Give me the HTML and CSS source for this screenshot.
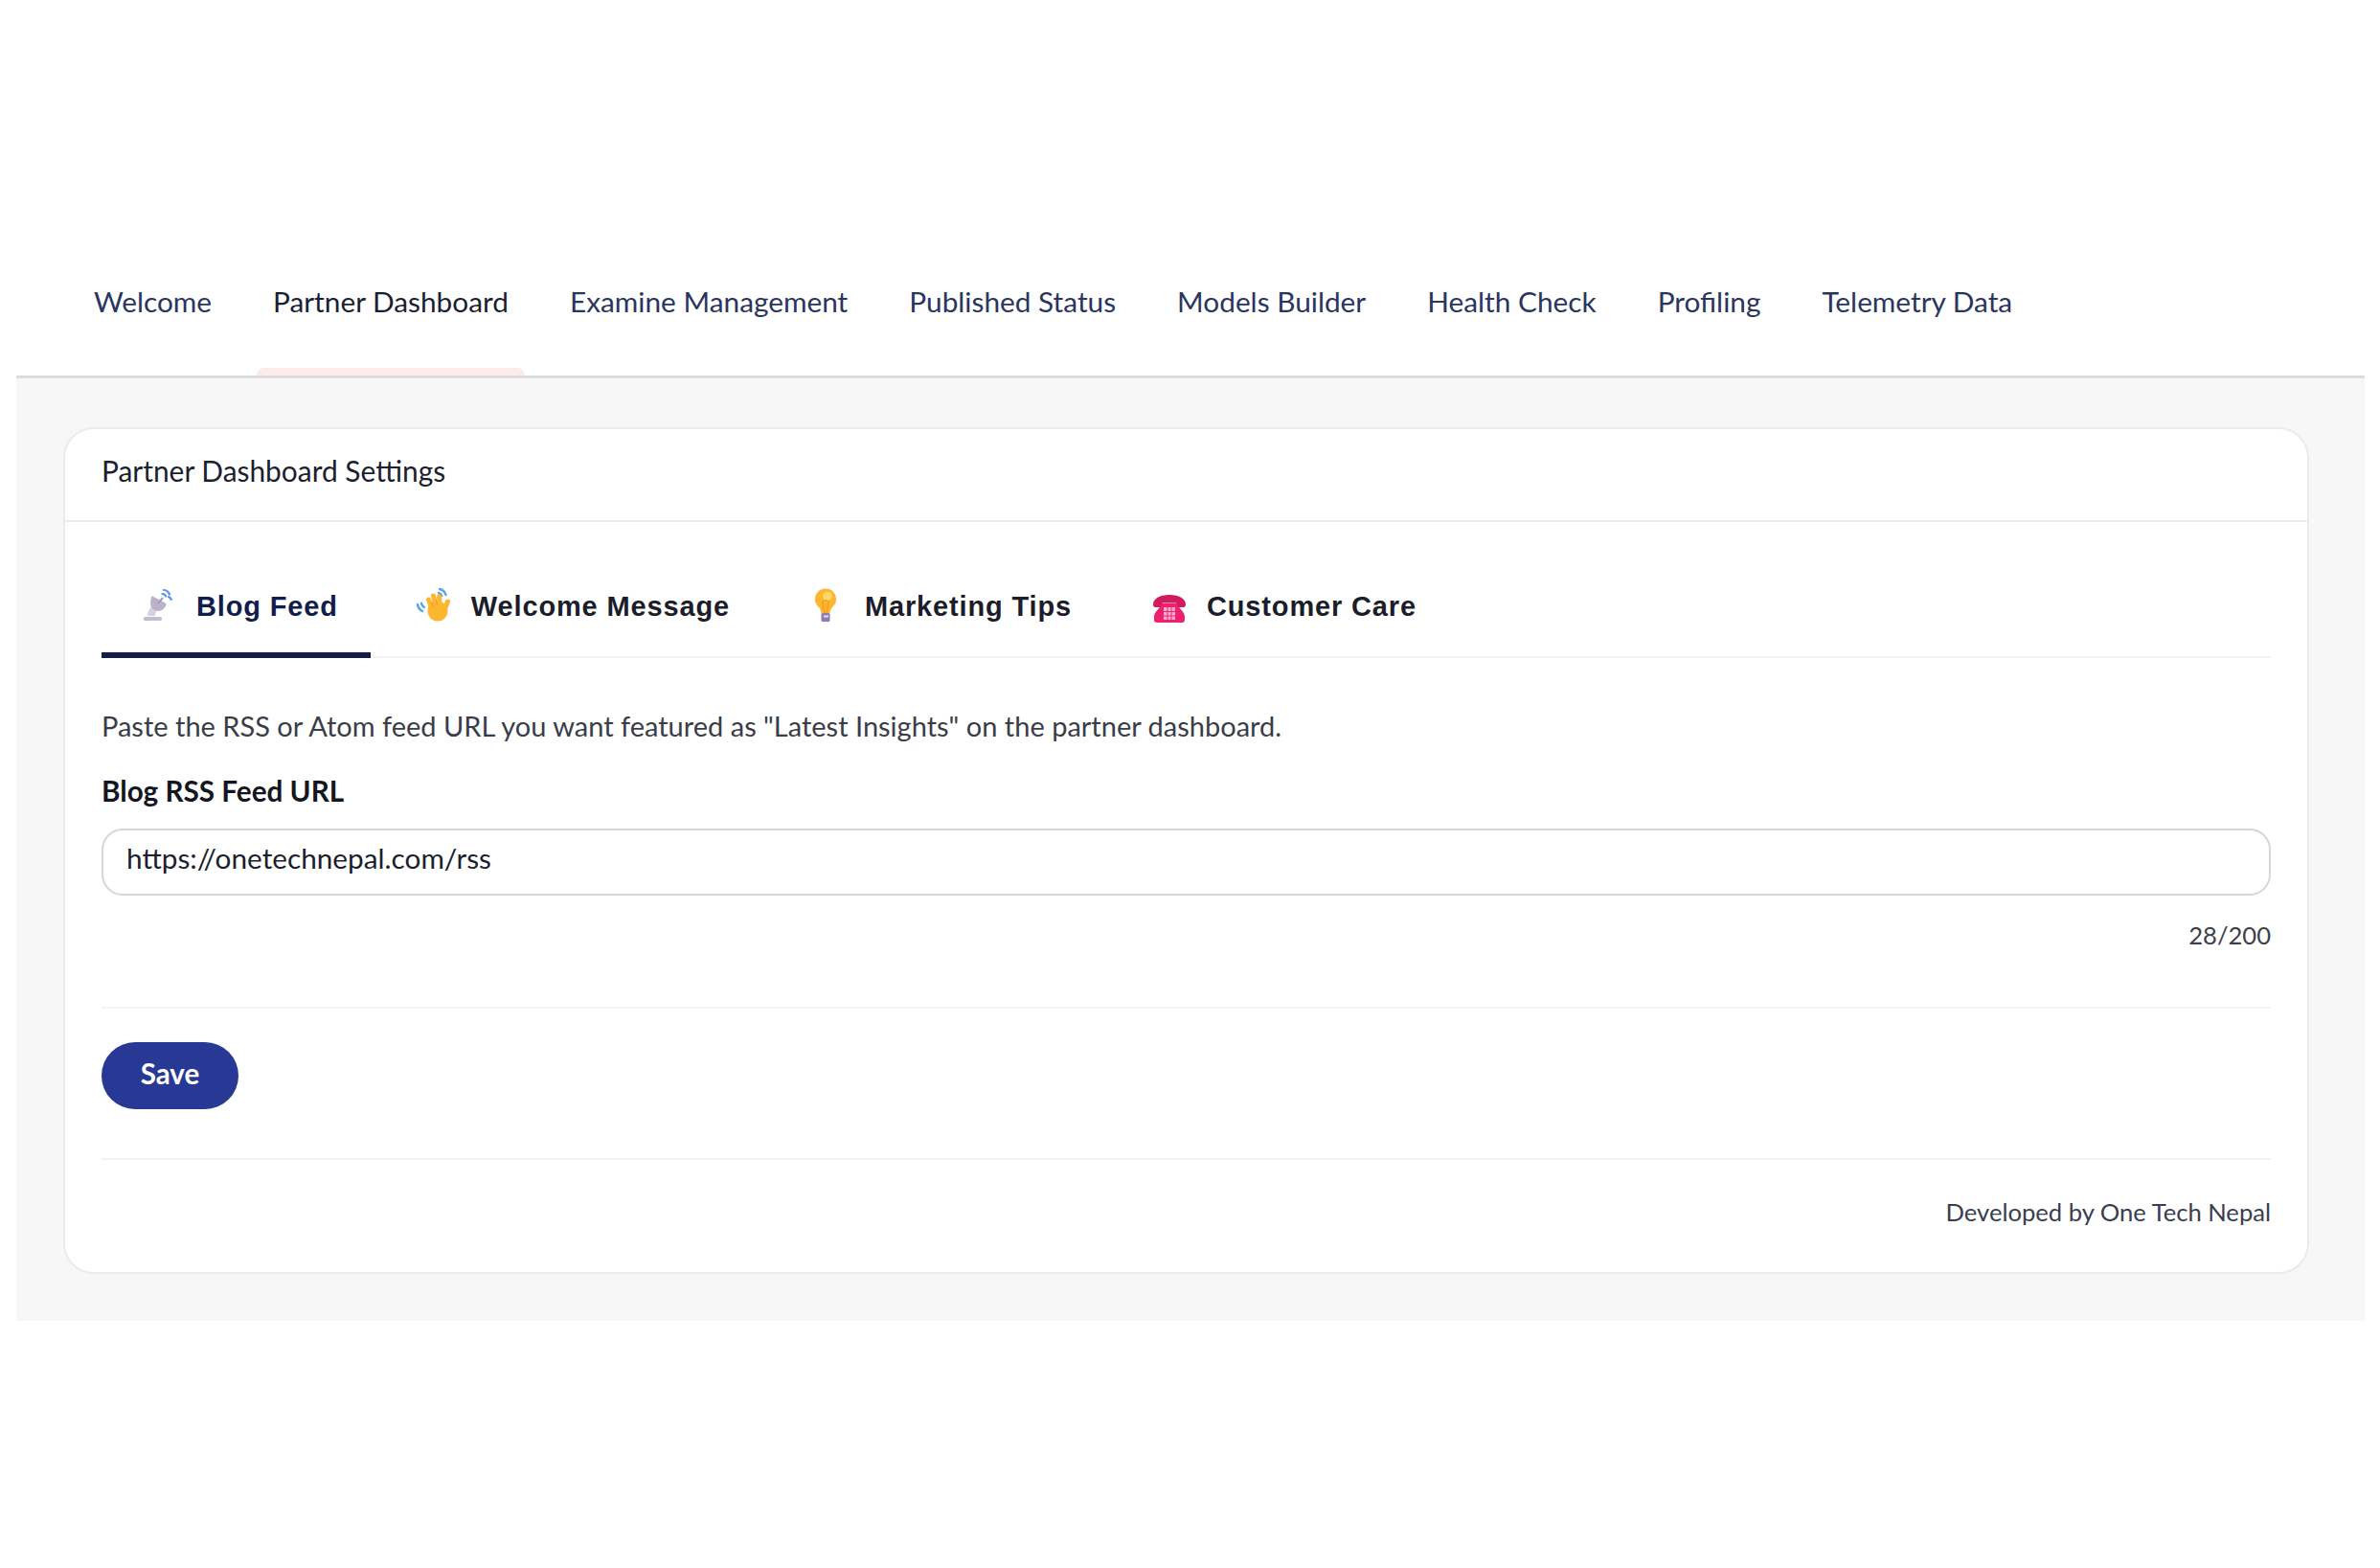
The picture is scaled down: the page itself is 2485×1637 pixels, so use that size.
FILE: index.html
```html
<!DOCTYPE html>
<html lang="en">
<head>
<meta charset="utf-8">
<title>Partner Dashboard Settings</title>
<link rel="stylesheet" href="styles.css">
</head>
<body>
<div class="shell">
  <nav class="topnav">
    <a class="topnav-item">Welcome</a>
    <a class="topnav-item is-active">Partner Dashboard</a>
    <a class="topnav-item">Examine Management</a>
    <a class="topnav-item">Published Status</a>
    <a class="topnav-item">Models Builder</a>
    <a class="topnav-item">Health Check</a>
    <a class="topnav-item">Profiling</a>
    <a class="topnav-item">Telemetry Data</a>
  </nav>
  <main class="content">
    <section class="card">
      <header class="card-head">Partner Dashboard Settings</header>
      <div class="card-body">
        <div class="tabs">
          <a class="tab is-active">
            <svg class="tab-icon" viewBox="0 0 36 36" aria-hidden="true">
              <path d="M23 2c2.500 .2 5 2 6 4.500M21.500 6c1.800 0 3 1 3.500 2.500M28 9c1.500 .6 2.500 1.600 2.800 3" fill="none" stroke="#5b8ff0" stroke-width="2.200" stroke-linecap="round"/>
              <path d="M10.500 8L25.500 16C25.500 22 18 26 12 23C8.500 20 8.500 14 10.500 8z" fill="#bdb2cc"/>
              <path d="M17 16l5-6" stroke="#a79bb8" stroke-width="2"/>
              <path d="M9 20l6 4l-1 5h-8l1-5z" fill="#d8d1e0"/>
              <rect x="2" y="30" width="19" height="4" rx="1.500" fill="#c5bbd3"/>
            </svg>
            <span>Blog Feed</span>
          </a>
          <a class="tab">
            <svg class="tab-icon" viewBox="0 0 36 36" aria-hidden="true">
              <path d="M24 1c3 .6 5.500 2.800 6.500 6M23 5c1.600 .4 2.600 1.400 3.200 3M1 17c.4 3 2.200 5.600 5 7M5 16c.4 1.800 1.200 3 2.800 4" fill="none" stroke="#5aa5e8" stroke-width="2.400" stroke-linecap="round"/>
              <ellipse cx="22" cy="24" rx="10.500" ry="10.500" fill="#fcb72e"/>
              <path d="M16 22L12.500 12M20 19L17.500 8M24.500 19L23.500 9M29 23L32.500 14" stroke="#fcb72e" stroke-width="5" stroke-linecap="round"/>
              <path d="M15.500 14l2 6M20.500 12l1 6" stroke="#ef9a2a" stroke-width="1" fill="none"/>
            </svg>
            <span>Welcome Message</span>
          </a>
          <a class="tab">
            <svg class="tab-icon" viewBox="0 0 36 36" aria-hidden="true">
              <circle cx="16" cy="11.500" r="11" fill="#fdb62f"/>
              <ellipse cx="18" cy="8.500" rx="5" ry="4.500" fill="#ffd769"/>
              <path d="M9 18l3 9h8l3-9z" fill="#fdb62f"/>
              <path d="M13 15c0-3 6-3 6 0l-1.500 10h-3z" fill="none" stroke="#f29a22" stroke-width="1.200"/>
              <rect x="11.500" y="26" width="9" height="9" rx="1.500" fill="#8e7ab4"/>
              <rect x="14" y="28.500" width="5" height="2" fill="#e4dff0"/>
            </svg>
            <span>Marketing Tips</span>
          </a>
          <a class="tab">
            <svg class="tab-icon" viewBox="0 0 36 36" aria-hidden="true">
              <g transform="translate(0 3)">
                <path d="M1 14c0-6 7-10 17-10s17 4 17 10c0 2-.8 3-2.500 3h-5c-1.500 0-2.200-1-2.200-2.500v-2H10.700v2c0 1.500-.7 2.500-2.200 2.500h-5C1.800 17 1 16 1 14z" fill="#d11b5f"/>
                <path d="M10 13h16c1 5 8 8 8 14v3c0 2-1 3-3 3H5c-2 0-3-1-3-3v-3c0-6 7-9 8-14z" fill="#f01f6f"/>
                <rect x="12" y="17" width="12" height="13" fill="#f7b3cd"/>
                <path d="M16 17v13M20 17v13M12 21.500h12M12 26h12" stroke="#f01f6f" stroke-width="1"/>
              </g>
            </svg>
            <span>Customer Care</span>
          </a>
        </div>
        <p class="intro">Paste the RSS or Atom feed URL you want featured as "Latest Insights" on the partner dashboard.</p>
        <label class="field-label" for="feed">Blog RSS Feed URL</label>
        <input class="field-input" id="feed" type="text" value="https://onetechnepal.com/rss">
        <div class="counter">28/200</div>
        <div class="actions">
          <button class="save" type="button">Save</button>
        </div>
        <footer class="credit">Developed by One Tech Nepal</footer>
      </div>
    </section>
  </main>
</div>
</body>
</html>
```
FILE: styles.css
```css
* { box-sizing: border-box; }
html, body { margin: 0; padding: 0; background: #fff; }
body { font-family: Lato, "Noto Sans", sans-serif; color: #222; }
.shell { margin: 0 16px 0 17px; padding-top: 270px; }

.topnav {
  display: flex;
  gap: 30px;
  height: 125px;
  padding-left: 64px;
  border-bottom: 3px solid #dcdcdf;
}
.topnav-item {
  position: relative;
  padding: 27px 17px 0;
  font-size: 29.800px;
  line-height: 36px;
  color: #2a3560;
  white-space: nowrap;
}
.topnav-item.is-active { color: #1b1f33; }
.topnav-item.is-active::after {
  content: "";
  position: absolute;
  left: 0;
  right: 0;
  bottom: 0;
  height: 8px;
  border-radius: 8px 8px 0 0;
  background: #fdeaea;
}

.content { background: #f7f7f8; padding: 51px 58px 50px 49px; height: 984px; }

.card {
  height: 884px;
  background: #fff;
  border: 2px solid #ebebed;
  border-radius: 32px;
  overflow: hidden;
}
.card-head {
  height: 97px;
  padding: 25px 38px 0;
  border-bottom: 2px solid #ebebed;
  font-size: 29.900px;
  line-height: 36px;
  color: #1c1f2e;
}
.card-body { padding: 0 38px; }

.tabs {
  display: flex;
  height: 142px;
  border-bottom: 2px solid #f3f3f4;
}
.tab {
  display: flex;
  align-items: center;
  gap: 21px;
  height: 142px;
  padding: 31px 36px 0 48px;
  font-family: "Liberation Sans", Arial, sans-serif;
  font-weight: 700;
  font-size: 29px;
  letter-spacing: .85px;
  color: #1c1d2b;
  white-space: nowrap;
  margin-bottom: -2px;
}
.tab span { padding-top: 3px; }
.tab.is-active {
  padding: 37px 34px 0 42px;
  color: #121d4c;
  border-bottom: 6px solid #121d4c;
}
.tab-icon { width: 36px; height: 36px; flex: none; overflow: visible; }

.intro {
  margin: 53px 0 0;
  font-size: 29px;
  line-height: 36px;
  color: #3a3d48;
}
.field-label {
  display: block;
  margin-top: 32px;
  font-weight: 700;
  font-size: 29.700px;
  line-height: 36px;
  color: #14161f;
}
.field-input {
  display: block;
  width: 100%;
  height: 70px;
  margin-top: 21px;
  padding: 0 24px 9px;
  border: 2px solid #d6d6da;
  border-radius: 22px;
  background: #fff;
  font-family: Lato, "Noto Sans", sans-serif;
  font-size: 29.750px;
  color: #1c1f2e;
}
.counter {
  margin-top: 23px;
  text-align: right;
  font-size: 25.600px;
  line-height: 36px;
  color: #3d404a;
}
.actions {
  margin-top: 57px;
  padding: 35px 0 51px;
  border-top: 2px solid #f3f3f4;
  border-bottom: 2px solid #f3f3f4;
}
.save {
  display: block;
  width: 143px;
  height: 70px;
  padding: 0 0 5px;
  border: 0;
  border-radius: 35px;
  background: #273895;
  color: #fff;
  font-family: Lato, "Noto Sans", sans-serif;
  font-weight: 700;
  font-size: 29.500px;
}
.credit {
  margin-top: 36px;
  text-align: right;
  font-size: 25.600px;
  line-height: 36px;
  color: #3a3d50;
}
```
